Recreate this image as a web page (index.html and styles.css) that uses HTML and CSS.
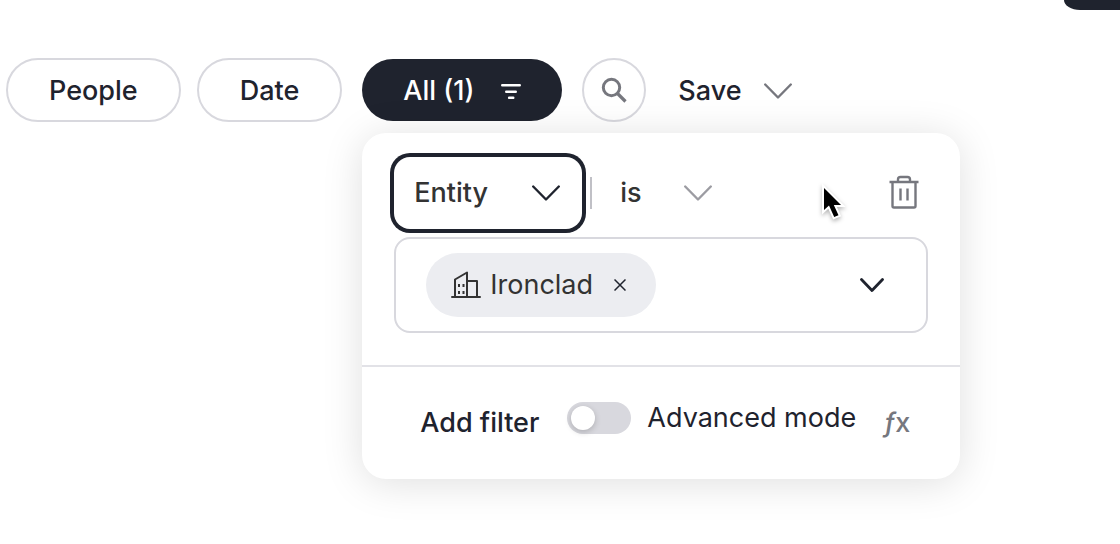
FILE: index.html
```html
<!doctype html>
<html lang="en">
<head>
    <meta charset="UTF-8">
    <meta name="viewport" content="width=device-width, initial-scale=1">
    <title>Filters</title>
    <link rel="stylesheet" href="styles.css">
</head>
<body>
<header class="topbar">
    <button class="topbar-action" type="button" aria-label="New"></button>
</header>

<div class="toolbar">
    <button class="pill" type="button">People</button>
    <button class="pill" type="button">Date</button>

    <div class="filter-menu">
        <button class="pill-active" type="button" aria-expanded="true">
            All (1)
            <svg width="20" height="16" viewBox="0 0 20 16" aria-hidden="true">
                <path d="M1.300 2.300h17.400M5.300 8.800h9.400M8.200 14.800h4" fill="none" stroke="currentColor" stroke-width="2.600" stroke-linecap="round"/>
            </svg>
        </button>

        <form class="popup">
            <div class="popup-body">
                <div class="rule">
                    <div class="dropdown dropdown-entity">
                        <select aria-label="Field">
                            <option>Entity</option>
                            <option>Date</option>
                        </select>
                        <svg class="chevron" width="28" height="16" viewBox="0 0 28 16" aria-hidden="true"><path d="M1.200 1.500L14 14.500l12.800-13"/></svg>
                    </div>
                    <span class="divider"></span>
                    <div class="dropdown dropdown-operator">
                        <select aria-label="Operator">
                            <option>is</option>
                            <option>is not</option>
                        </select>
                        <svg class="chevron" width="28" height="16" viewBox="0 0 28 16" aria-hidden="true"><path d="M1.200 1.500L14 14.500l12.800-13"/></svg>
                    </div>
                    <button class="remove" type="button" aria-label="Delete filter">
                        <svg width="30" height="34" viewBox="0 0 30 34" aria-hidden="true">
                            <path d="M0.500 7h29M3.500 7v24q0 1.500 1.500 1.500h20q1.500 0 1.500-1.500V7M9 7V4.500Q9 2 11.500 2h7Q21 2 21 4.500V7M11.500 13.500v12M18.500 13.500v12" fill="none" stroke="currentColor" stroke-width="2.400"/>
                        </svg>
                    </button>
                </div>

                <div class="values">
                    <span class="tag">
                        <svg width="30" height="28" viewBox="0 0 30 28" aria-hidden="true">
                            <path d="M1 26h28M4 26V8.500L16 1.500V26M16 10h10v16" fill="none" stroke="currentColor" stroke-width="2" stroke-linejoin="round" stroke-linecap="round"/>
                            <path d="M7 13h2v3H7zM11.500 13h2v3h-2zM7 20h2v3H7zM11.500 20h2v3h-2z" fill="currentColor"/>
                        </svg>
                        Ironclad
                        <button class="tag-remove" type="button" aria-label="Remove Ironclad">
                            <svg width="12" height="12" viewBox="0 0 12 12" aria-hidden="true"><path d="M0.500 0.500l11 11M11.500 0.500l-11 11" fill="none" stroke="currentColor" stroke-width="1.500"/></svg>
                        </button>
                    </span>
                    <button class="values-open" type="button" aria-label="Show values">
                        <svg class="chevron" width="24" height="14" viewBox="0 0 24 14" aria-hidden="true"><path d="M1.500 1.500L12 12.500l10.500-11"/></svg>
                    </button>
                </div>
            </div>

            <div class="popup-footer">
                <button class="add-filter" type="button">Add filter</button>
                <label class="advanced">
                    <input class="switch" type="checkbox" role="switch">
                    Advanced mode
                </label>
                <span class="fx"><i>ƒ</i>x</span>
            </div>

            <svg class="cursor" width="24" height="36" viewBox="0 0 24 36" aria-hidden="true">
                <path d="M2 2v22l5-4.500 5.200 11.500 4.300-1.800L11.800 19H19z"/>
            </svg>
        </form>
    </div>

    <button class="search" type="button" aria-label="Search">
        <svg width="26" height="26" viewBox="0 0 26 26" aria-hidden="true">
            <circle cx="10.500" cy="10.500" r="8.200" fill="none" stroke="currentColor" stroke-width="3"/>
            <path d="M16.500 16.500l8 8" stroke="currentColor" stroke-width="3.200"/>
        </svg>
    </button>
    <button class="save" type="button">
        Save
        <svg class="chevron" width="28" height="16" viewBox="0 0 28 16" aria-hidden="true"><path d="M1.200 1.500L14 14.500l12.800-13"/></svg>
    </button>
</div>
</body>
</html>
```

FILE: styles.css
```css
* {
    box-sizing: border-box;
}

body {
    min-height: 100vh;
    margin: 0;
    background-color: #fff;
    color: #1f232e;
    font-family: Inter, "Liberation Sans", sans-serif;
    font-size: 27px;
    font-weight: 500;
    line-height: 32px;
}

button,
select {
    margin: 0;
    padding: 0;
    border: 0;
    background: none;
    color: inherit;
    font: inherit;
    cursor: pointer;
}

svg {
    display: block;
    flex: none;
}

.chevron {
    fill: none;
    stroke: currentColor;
    stroke-width: 2.4;
    stroke-linecap: round;
    stroke-linejoin: round;
}

.topbar {
    display: flex;
    justify-content: flex-end;
}

.topbar-action {
    width: 56px;
    height: 10px;
    border-bottom-left-radius: 16px 10px;
    background-color: #1f232e;
}

.toolbar {
    display: flex;
    align-items: center;
    margin-top: 48px;
    padding-left: 6px;
}

.pill {
    height: 64px;
    margin-right: 16px;
    padding: 2px 41px 0;
    border: 2px solid #d8d8de;
    border-radius: 32px;
}

.filter-menu {
    position: relative;
    margin: 0 20px 0 4px;
}

.pill-active {
    display: flex;
    align-items: center;
    gap: 27px;
    height: 62px;
    padding: 2px 41px 0;
    border-radius: 31px;
    background-color: #1f232e;
    color: #fff;
}

.search {
    display: flex;
    align-items: center;
    justify-content: center;
    width: 64px;
    height: 64px;
    border: 2px solid #d8d8de;
    border-radius: 50%;
    color: #76777e;
}

.save {
    display: flex;
    align-items: center;
    gap: 22px;
    margin-left: 32px;
    padding-top: 2px;
}

.save .chevron {
    color: #76777e;
}

.popup {
    position: absolute;
    top: 74px;
    left: 0;
    width: 598px;
    border-radius: 24px;
    background-color: #fff;
    box-shadow: 0 4px 40px rgba(0, 0, 0, 0.13);
}

.popup-body {
    display: grid;
    gap: 8px;
    padding: 24px 32px 32px;
    color: #333;
}

.rule {
    display: flex;
    align-items: center;
}

/* select and its arrow share one cell */
.dropdown {
    display: grid;
    align-items: center;
    height: 72px;
}

.dropdown select {
    grid-area: 1 / 1;
    width: 100%;
    height: 100%;
    outline: none;
    appearance: none;
}

.dropdown .chevron {
    grid-area: 1 / 1;
    justify-self: end;
    pointer-events: none;
}

.dropdown-entity {
    width: 188px;
}

.dropdown-entity select {
    padding-left: 20px;
    box-shadow: 0 0 0 4px #1f232e;
    border-radius: 16px;
}

.dropdown-entity .chevron {
    margin-right: 22px;
    color: #1f232e;
}

.divider {
    width: 2px;
    height: 32px;
    margin-left: 8px;
    background-color: #c0c0c6;
}

.dropdown-operator {
    width: 120px;
}

.dropdown-operator select {
    padding-left: 28px;
}

.dropdown-operator .chevron {
    color: #9c9ca2;
}

.remove {
    margin-left: auto;
    padding: 10px 9px 12px;
    color: #76777e;
}

.values {
    display: flex;
    align-items: center;
    justify-content: space-between;
    padding: 14px 42px 14px 30px;
    border: 2px solid #d8d8de;
    border-radius: 16px;
}

.tag {
    display: flex;
    align-items: center;
    gap: 9px;
    height: 64px;
    padding: 0 30px 0 25px;
    border-radius: 32px;
    background-color: #ecedf1;
    font-weight: 400;
}

.tag-remove {
    margin-left: 12px;
    color: #1f232e;
}

.values-open {
    color: #1f232e;
}

.values-open .chevron {
    stroke-width: 2.8;
}

.popup-footer {
    display: flex;
    align-items: center;
    height: 114px;
    padding: 0 50px 0 58px;
    border-top: 2px solid #e2e2e7;
}

.advanced {
    display: flex;
    align-items: center;
    gap: 16px;
    margin-left: 28px;
    padding-bottom: 10px;
    font-weight: 400;
}

.switch {
    display: flex;
    align-items: center;
    width: 64px;
    height: 32px;
    margin: 0;
    padding: 4px;
    border-radius: 16px;
    background-color: #d8d8de;
    appearance: none;
}

.switch::before {
    content: "";
    width: 24px;
    height: 24px;
    border-radius: 50%;
    background-color: #fff;
    box-shadow: 0 2px 6px rgba(0, 0, 0, 0.2);
}

.switch:checked {
    justify-content: flex-end;
    background-color: #1f232e;
}

.fx {
    margin-left: auto;
    color: #76777e;
}

.cursor {
    position: absolute;
    top: 53px;
    left: 460px;
    overflow: visible;
    fill: #000;
    stroke: #fff;
    stroke-width: 4;
    paint-order: stroke;
    filter: drop-shadow(0 2px 2px rgba(0, 0, 0, 0.3));
}
```
